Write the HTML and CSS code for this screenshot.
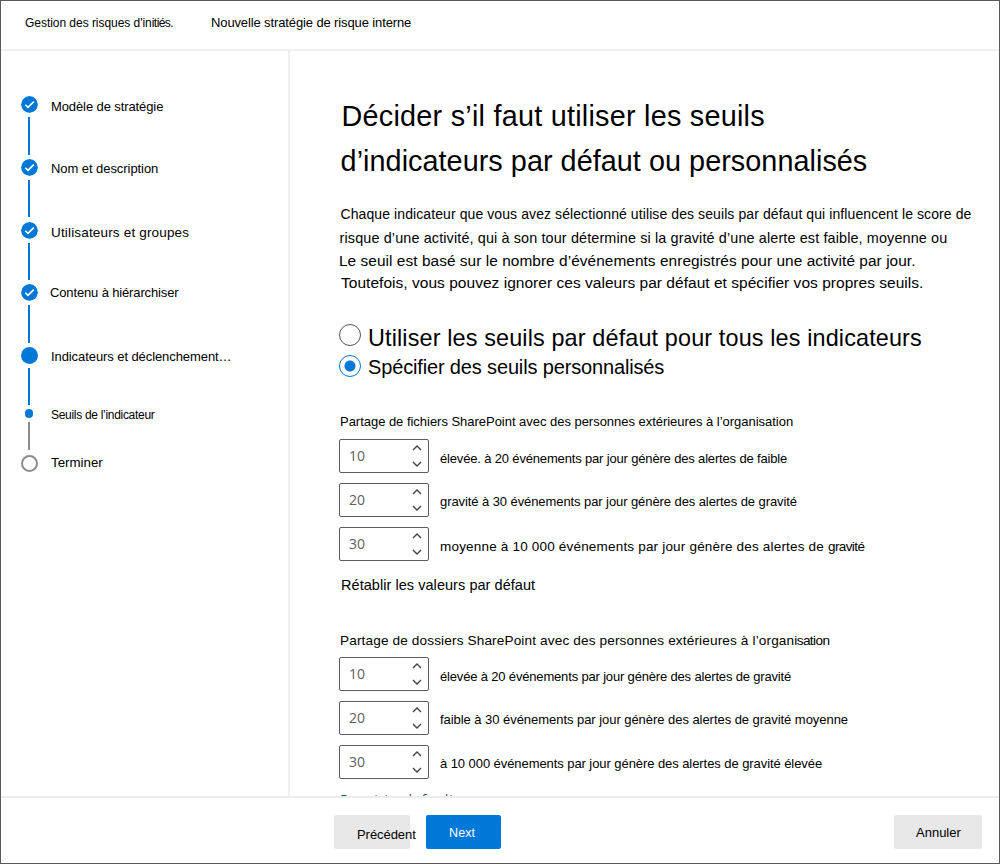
FILE: index.html
```
<!DOCTYPE html>
<html lang="fr">
<head>
<meta charset="utf-8">
<title>Nouvelle stratégie de risque interne</title>
<link rel="stylesheet" href="styles.css">
</head>
<body>
<svg class="defs" aria-hidden="true">
  <symbol id="check" viewBox="0 0 17 17"><circle cx="8.5" cy="8.5" r="8.5" fill="#0078d7"/><path d="M4.3 8.7l2.7 2.7 5.8-5.8" fill="none" stroke="#fff" stroke-width="1.6"/></symbol>
  <symbol id="arrows" viewBox="0 0 10 22"><path d="M1 5l4-4 4 4M1 17l4 4 4-4" fill="none" stroke="#444" stroke-width="1.4"/></symbol>
</svg>
<div class="frame">
  <header class="header">
    <span class="crumb">Gestion des risques d'in<span class="tight">itiés.</span></span>
    <span class="page-name">Nouvelle stratégie de risque interne</span>
  </header>
  <div class="body">
    <nav class="steps">
      <div class="step">
        <div class="rail"><svg class="mark"><use href="#check"/></svg><i class="line"></i></div>
        <span class="label s1">Modèle de stratégie</span>
      </div>
      <div class="step">
        <div class="rail"><svg class="mark"><use href="#check"/></svg><i class="line"></i></div>
        <span class="label s2">Nom et description</span>
      </div>
      <div class="step">
        <div class="rail"><svg class="mark"><use href="#check"/></svg><i class="line"></i></div>
        <span class="label s3">Utilisateurs et groupes</span>
      </div>
      <div class="step">
        <div class="rail"><svg class="mark"><use href="#check"/></svg><i class="line"></i></div>
        <span class="label s4">Contenu à hiérarchiser</span>
      </div>
      <div class="step">
        <div class="rail"><i class="mark current"></i><i class="line"></i></div>
        <span class="label s5">Indicateurs et déclenchement…</span>
      </div>
      <div class="step sub">
        <div class="rail"><i class="dot"></i><i class="line pending"></i></div>
        <span class="label s6">Seuils de l’indicateur</span>
      </div>
      <div class="step last">
        <div class="rail"><i class="mark ring"></i></div>
        <span class="label s7">Terminer</span>
      </div>
    </nav>
    <main class="main">
      <h1 class="title"><span class="t1">Décider s’il faut utiliser les seuils</span><span class="t2">d’indicateurs par défaut ou personnalisés</span></h1>
      <p class="intro">
        <span class="p1">Chaque indicateur que vous avez sélectionné utilise des seuils par défaut qui influencent le score de</span>
        <span class="p2">risque d’une activité, qui à son tour détermine si la gravité d’une alerte est faible, moyenne ou</span>
        <span class="p3">Le seuil est basé sur le nombre d’événements enregistrés pour une activité par jour.</span>
        <span class="p4">Toutefois, vous pouvez ignorer ces valeurs par défaut et spécifier vos propres seuils.</span>
      </p>
      <div class="radios">
        <div class="radio first"><i class="knob"></i><span class="r1">Utiliser les seuils par défaut pour tous les indicateurs</span></div>
        <div class="radio"><i class="knob on"></i><span class="r2">Spécifier des seuils personnalisés</span></div>
      </div>
      <section class="group">
        <h2 class="name n1">Partage de fichiers SharePoint avec des personnes extérieures à l’organisation</h2>
        <div class="rows">
          <div class="row"><div class="spin">10<svg class="arrows"><use href="#arrows"/></svg></div><span class="txt low g1">élevée. à 20 événements par jour génère des alertes de faible</span></div>
          <div class="row"><div class="spin">20<svg class="arrows"><use href="#arrows"/></svg></div><span class="txt g2">gravité à 30 événements par jour génère des alertes de gravité</span></div>
          <div class="row"><div class="spin">30<svg class="arrows"><use href="#arrows"/></svg></div><span class="txt low g3">moyenne à 10 000 événements par jour génère des alertes de <span class="tight">gravité</span></span></div>
        </div>
        <div class="restore">Rétablir les valeurs par défaut</div>
      </section>
      <section class="group second">
        <h2 class="name n2">Partage de dossiers SharePoint avec des personnes extérieures à l’organ<span class="tight">isation</span></h2>
        <div class="rows">
          <div class="row"><div class="spin">10<svg class="arrows"><use href="#arrows"/></svg></div><span class="txt low g4">élevée à 20 événements par jour génère des alertes de gravité</span></div>
          <div class="row"><div class="spin">20<svg class="arrows"><use href="#arrows"/></svg></div><span class="txt g5">faible à 30 événements par jour génère des alertes de gravité moyenne</span></div>
          <div class="row"><div class="spin">30<svg class="arrows"><use href="#arrows"/></svg></div><span class="txt g6">à 10 000 événements par jour génère des alertes de gravité élevée</span></div>
        </div>
        <div class="reset">Reset to default</div>
      </section>
    </main>
  </div>
  <footer class="footer">
    <div class="btn prev">Précédent</div>
    <div class="btn next">Next</div>
    <div class="btn cancel">Annuler</div>
  </footer>
</div>
</body>
</html>
```

FILE: styles.css
```
* { box-sizing: border-box; }
body { margin: 0; font-family: "Liberation Sans", Arial, sans-serif; font-size: 13px; color: #000; background: #fff; }
.defs { display: none; }
.frame { width: 1000px; height: 864px; border: 1px solid #5a5a5a; display: flex; flex-direction: column; overflow: hidden; }
.header { height: 50px; border-bottom: 2px solid #f0f0f0; display: flex; padding-left: 24px; line-height: 44px; white-space: nowrap; flex: none; }
.crumb { width: 186px; font-size: 12px; letter-spacing: -0.04px; }
.page-name { letter-spacing: -0.12px; }
.tight { letter-spacing: -0.55px; }

.body { flex: none; height: 745px; display: flex; overflow: hidden; }
.steps { width: 289px; flex: none; border-right: 2px solid #f0f0f0; padding: 45.3px 0 0 19.6px; }
.step { display: flex; height: 62.7px; }
.rail { width: 17px; display: flex; flex-direction: column; align-items: center; }
.mark { width: 17px; height: 17px; flex: none; display: block; border-radius: 50%; }
.current { background: #0078d7; }
.ring { border: 2px solid #8c8c8c; }
.line { width: 2px; height: 37.4px; margin-top: 4px; background: #0078d7; }
.pending { background: #8c8c8c; height: 28px; }
.dot { width: 8.6px; height: 8.6px; border-radius: 50%; background: #0078d7; }
.sub { height: 45.4px; margin-top: -0.5px; }
.label { margin-left: 13.4px; line-height: 20px; height: 20px; white-space: nowrap; }
.s1 { letter-spacing: -0.1px; margin-top: 1px; }
.s2 { letter-spacing: -0.06px; }
.s3 { font-size: 13.5px; letter-spacing: 0.17px; margin-top: 1px; }
.s4 { letter-spacing: -0.14px; margin: -1px 0 0 12.4px; }
.s5 { letter-spacing: -0.08px; }
.s6 { font-size: 12px; letter-spacing: -0.3px; margin-top: -4.3px; }
.s7 { font-size: 13.3px; margin-top: -2px; }

.main { flex: 1; padding: 43px 0 0 49px; white-space: nowrap; min-width: 0; }
.title { margin: 0; font-size: 28.8px; font-weight: 400; line-height: 45px; }
.title span, .intro span { display: block; }
.t1 { letter-spacing: 0.24px; margin-left: 2.5px; }
.t2 { letter-spacing: 0.04px; margin-left: 1.6px; }
.intro { margin: 20px 0 0; }
.p1 { font-size: 14px; line-height: 21px; letter-spacing: 0.09px; margin-left: 1.5px; }
.p2 { font-size: 14.4px; line-height: 26px; letter-spacing: 0.13px; margin-left: 0.6px; }
.p3 { font-size: 15.4px; line-height: 20px; letter-spacing: 0.06px; }
.p4 { font-size: 15.5px; line-height: 24px; height: 22px; letter-spacing: 0.03px; margin-left: 2px; }

.radios { margin-top: 31px; }
.radio { display: flex; height: 24px; line-height: 24px; }
.radio.first { height: 31px; line-height: 28px; }
.knob { width: 22px; height: 22px; border: 1px solid #555; border-radius: 50%; margin-right: 7px; flex: none; }
.knob.on { border-color: #0078d7; background: radial-gradient(circle, #0078d7 5px, transparent 6px); }
.r1 { font-size: 23.4px; letter-spacing: 0.14px; }
.r2 { font-size: 20px; letter-spacing: -0.15px; }

.group { margin-top: 32px; }
.second { margin-top: 35px; }
.name { margin: 0 0 7px 1px; font-size: 13px; font-weight: 400; line-height: 21px; }
.n1 { letter-spacing: -0.028px; }
.n2 { font-size: 13.6px; letter-spacing: 0.14px; margin-bottom: 6px; }
.n2 .tight, .g3 .tight { letter-spacing: -0.6px; }
.rows { display: grid; gap: 10px; }
.row { display: flex; height: 34px; gap: 11px; }
.spin { width: 90px; height: 34px; border: 1px solid #5c5c5c; border-radius: 2px; padding: 0 6px 1px 9px; display: flex; justify-content: space-between; align-items: center; font: 14px/20px "Open Sans", "Noto Sans", sans-serif; color: #606060; }
.arrows { width: 10px; height: 22px; }
.txt { line-height: 37px; }
.low { line-height: 39px; }
.g1 { letter-spacing: -0.163px; }
.g2 { letter-spacing: -0.082px; }
.g3 { font-size: 13.5px; letter-spacing: 0.19px; }
.g4 { letter-spacing: -0.168px; }
.g5 { letter-spacing: -0.046px; }
.g6 { letter-spacing: -0.07px; }
.restore { margin: 14px 0 0 2px; font-size: 14.5px; line-height: 20px; letter-spacing: 0.05px; }
.reset { margin: 11px 0 0 1px; font: 14px/20px "Open Sans", "Noto Sans", sans-serif; letter-spacing: 0.75px; color: #1f4e79; }

.footer { flex: 1; border-top: 2px solid #ececec; padding: 17px 17px 0 333px; display: flex; gap: 16px; }
.btn { height: 34px; line-height: 36px; border-radius: 2px; background: #e8e8e8; white-space: nowrap; }
.prev { width: 76px; padding-left: 23px; line-height: 40px; letter-spacing: -0.06px; }
.next { width: 75px; padding-left: 23px; background: #0078d7; color: #fff; font-size: 12.5px; letter-spacing: 0.1px; }
.cancel { width: 88px; padding-left: 22px; margin-left: auto; }
```
